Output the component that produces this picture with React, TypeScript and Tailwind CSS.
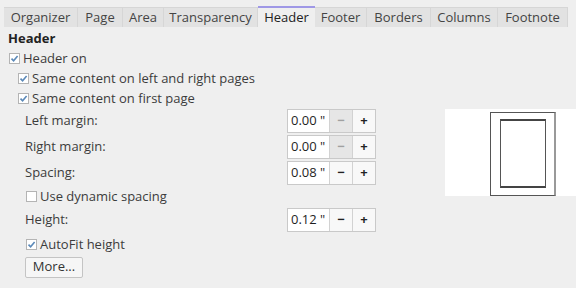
import React from "react";

const tabs = [
  { label: "Organizer", w: 74 },
  { label: "Page", w: 45 },
  { label: "Area", w: 41 },
  { label: "Transparency", w: 94 },
  { label: "Header", w: 57, active: true },
  { label: "Footer", w: 52 },
  { label: "Borders", w: 64 },
  { label: "Columns", w: 67 },
  { label: "Footnote", w: 70 },
];

const Check = ({ checked }: { checked: boolean }) => (
  <span className="flex h-[11px] w-[11px] items-center justify-center border border-[#b4b4b4] bg-white">
    {checked && (
      <svg width="9" height="9" viewBox="0 0 9 9">
        <path d="M1.5 4.6 L3.6 6.8 L7.6 2" fill="none" stroke="#5b89b8" strokeWidth="1.6" />
      </svg>
    )}
  </span>
);

const CheckRow = ({ checked, label, className }: { checked: boolean; label: string; className: string }) => (
  <div className={"flex h-[20px] items-center gap-[3px] " + className}>
    <Check checked={checked} />
    <span>{label}</span>
  </div>
);

const Spin = ({ value, minusOff }: { value: string; minusOff?: boolean }) => (
  <div className="flex h-[24px] w-[89px] border border-[#c9c9c9] bg-white">
    <div className="flex w-[41px] items-center pl-[3px] text-[#1f1f1f]">{value}</div>
    <div
      className={
        "flex w-[23px] items-center justify-center border-l border-[#d2d2d2] font-bold " +
        (minusOff ? "bg-[#e6e6e6] text-[#a0a0a0]" : "bg-[#f8f8f8] text-[#222]")
      }
    >
      −
    </div>
    <div className="flex flex-1 items-center justify-center border-l border-[#d2d2d2] bg-[#f8f8f8] font-bold text-[#222]">
      +
    </div>
  </div>
);

const FieldRow = ({ label, children }: { label: string; children: React.ReactNode }) => (
  <div className="flex h-[24px] items-center">
    <span className="w-[287px] pl-[25px]">{label}</span>
    {children}
  </div>
);

export default function App() {
  return (
    <div
      className="h-[288px] w-[576px] overflow-hidden bg-[#efefef] text-[13px] text-[#3c3c3c]"
      style={{ fontFamily: '"Open Sans", "Noto Sans", sans-serif' }}
    >
      <div className="flex pl-[4px] pt-[6px]">
        {tabs.map((t) =>
          t.active ? (
            <div
              key={t.label}
              style={{ width: t.w }}
              className="flex h-[21px] items-center justify-center border-t-2 border-[#9f98e6] bg-[#efefef] text-[#222]"
            >
              {t.label}
            </div>
          ) : (
            <div
              key={t.label}
              style={{ width: t.w }}
              className="mt-[1px] flex h-[20px] items-center justify-center border-r border-t border-[#d6d6d6] bg-[#e2e2e2] text-[#444]"
            >
              {t.label}
            </div>
          )
        )}
      </div>
      <div className="pl-[8px] pt-[2px] font-bold text-[#222]">Header</div>
      <CheckRow checked label="Header on" className="pl-[9px]" />
      <CheckRow checked label="Same content on left and right pages" className="pl-[18px]" />
      <CheckRow checked label="Same content on first page" className="pl-[18px]" />
      <div className="flex">
        <div className="flex w-[445px] flex-col">
          <FieldRow label="Left margin:">
            <Spin value={'0.00 "'} minusOff />
          </FieldRow>
          <div className="mt-[2px]">
            <FieldRow label="Right margin:">
              <Spin value={'0.00 "'} minusOff />
            </FieldRow>
          </div>
          <div className="mt-[2px]">
            <FieldRow label="Spacing:">
              <Spin value={'0.08 "'} />
            </FieldRow>
          </div>
          <CheckRow checked={false} label="Use dynamic spacing" className="mt-[2px] pl-[26px]" />
          <div className="mt-[1px]">
            <FieldRow label="Height:">
              <Spin value={'0.12 "'} />
            </FieldRow>
          </div>
          <CheckRow checked label="AutoFit height" className="mt-[3px] pl-[26px]" />
          <div className="pl-[25px] pt-[2px]">
            <div className="flex h-[21px] w-[58px] items-center justify-center rounded-[2px] border border-[#c4c4c4] bg-[#f6f6f6] text-[#333]">
              More...
            </div>
          </div>
        </div>
        <div className="flex h-[87px] flex-1 bg-white pl-[45px] pt-[3px]">
          <div className="flex h-[84px] w-[66px] justify-center border border-[#555] border-r-2 border-r-[#999] pt-[6px]">
            <div className="h-[69px] w-[46px] border border-[#555] border-y-2 border-y-[#444]" />
          </div>
        </div>
      </div>
    </div>
  );
}
